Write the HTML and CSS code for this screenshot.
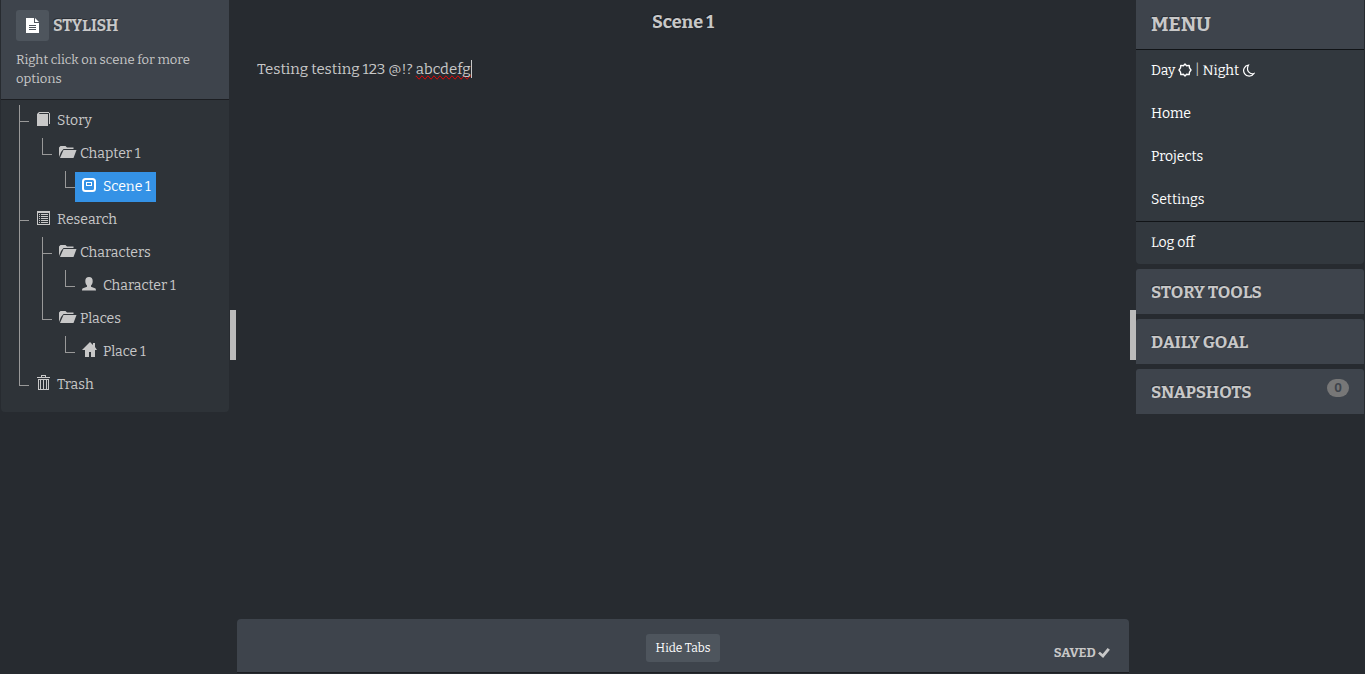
FILE: index.html
```html
<!DOCTYPE html>
<html lang="en">
<head>
    <meta charset="utf-8">
    <title>Stylish</title>
    <link rel="stylesheet" href="styles.css">
</head>
<body>
    <!-- Icons used in the project tree -->
    <svg class="sprite" aria-hidden="true">
        <symbol id="icon-folder" viewBox="0 0 18 16">
            <path d="M0 13V3.5L1.5 2h5L8 3.500h6.500V5H4.500L2 8z"/>
            <path d="M4.500 6h13l-3 8H1z"/>
        </symbol>
    </svg>

    <div class="layout">
        <aside class="sidebar">
            <div class="panel">
                <div class="panel-heading project-heading">
                    <div class="project-title">
                        <button class="btn btn-icon" type="button" aria-label="New scene">
                            <svg width="13" height="15" viewBox="0 0 13 15"><path fill="#fff" d="M0 0h8v5h5v10H0zM9 0l4 4H9z"/><path stroke="#4e555d" d="M3 7.5h7M3 9.5h7M3 11.5h7"/></svg>
                        </button>
                        <h3>STYLISH</h3>
                    </div>
                    <p class="hint">Right click on scene for more options</p>
                </div>
                <div class="panel-body">
                    <ul class="tree">
                        <li>
                            <a href="#"><svg class="icon" viewBox="0 0 18 16"><path d="M1 3l2-2h10v1H3.500L3 3h9v12H1zM13 2h1v11h-1z"/></svg>Story</a>
                            <ul>
                                <li>
                                    <a href="#"><svg class="icon"><use href="#icon-folder"/></svg>Chapter 1</a>
                                    <ul>
                                        <li>
                                            <a class="selected" href="#"><svg class="icon" viewBox="0 0 18 16"><rect x="1" y="2" width="12" height="12" rx="2.5" fill="none" stroke="#fff" stroke-width="2"/><rect x="4.5" y="5.5" width="5" height="3" fill="none" stroke="#fff"/></svg>Scene 1</a>
                                        </li>
                                    </ul>
                                </li>
                            </ul>
                        </li>
                        <li>
                            <a href="#"><svg class="icon" viewBox="0 0 18 16"><path fill-rule="evenodd" d="M1 1h13v14H1zM2 3v11h11V3z"/><path d="M3 4h1v1H3zM5 4h7v1H5zM3 6h1v1H3zM5 6h7v1H5zM3 8h1v1H3zM5 8h7v1H5zM3 10h1v1H3zM5 10h7v1H5zM3 12h1v1H3zM5 12h7v1H5z"/></svg>Research</a>
                            <ul>
                                <li>
                                    <a href="#"><svg class="icon"><use href="#icon-folder"/></svg>Characters</a>
                                    <ul>
                                        <li>
                                            <a href="#"><svg class="icon" viewBox="0 0 18 16"><path d="M7 1c2.500 0 3.700 1.500 3.700 4 0 2-.7 3.500-1.700 4.500v1.200l4 1.500c.7.300 1 1 1 2.300H0c0-1.300.3-2 1-2.300l4-1.500V9.500C4 8.500 3.300 7 3.300 5 3.300 2.500 4.500 1 7 1z"/></svg>Character 1</a>
                                        </li>
                                    </ul>
                                </li>
                                <li>
                                    <a href="#"><svg class="icon"><use href="#icon-folder"/></svg>Places</a>
                                    <ul>
                                        <li>
                                            <a href="#"><svg class="icon" viewBox="0 0 18 16"><path d="M8 0l3 3V1h2v4l2 3h-2v7H9v-5H7v5H3V8H0z"/></svg>Place 1</a>
                                        </li>
                                    </ul>
                                </li>
                            </ul>
                        </li>
                        <li>
                            <a href="#"><svg class="icon" viewBox="0 0 18 16"><path fill-rule="evenodd" d="M1 2h4V0h5v2h4v1H1zM6 1v1h3V1zM2 4h11v11H2zM3 5v9h1V5zM5 5v9h2V5zM8 5v9h2V5zM11 5v9h1V5z"/></svg>Trash</a>
                        </li>
                    </ul>
                </div>
            </div>
        </aside>

        <div class="resizer resizer-left"></div>

        <main class="editor">
            <h4 class="scene-title">Scene 1</h4>
            <div class="scene-text" contenteditable="true" role="textbox" aria-label="Scene text" spellcheck="false">Testing testing 123 @!? <span class="misspelled">abcdefg</span><span class="caret"></span></div>
            <div class="toolbar">
                <button class="btn btn-tabs" type="button">Hide Tabs</button>
                <span class="saved">SAVED
                    <svg width="12" height="10" viewBox="0 0 13 11"><path fill="#c8c8c8" d="M0 6l2-2 3 2.500L10.500 0 13 2 5.500 11z"/></svg>
                </span>
            </div>
        </main>

        <div class="resizer resizer-right"></div>

        <aside class="sidebar sidebar-right">
            <nav class="panel menu">
                <h2 class="panel-heading">MENU</h2>
                <ul>
                    <li class="divider">
                        <a href="#">Day <svg width="14" height="14" viewBox="0 0 14 14"><path fill="none" stroke="#fff" stroke-width="1.400" stroke-linejoin="round" d="M7 1l1.600 1.700 2.600-.3.300 2.500L13 7l-1.500 2.100-.3 2.500-2.600-.3L7 13l-1.600-1.700-2.600.3-.3-2.500L1 7l1.500-2.100.3-2.500 2.600.3z"/></svg></a>
                        |
                        <a href="#">Night <svg width="13" height="13" viewBox="0 0 13 13"><path fill="none" stroke="#fff" stroke-width="1.200" d="M6.500 1A5.600 5.600 0 1 0 12 9.500C8 10.800 3.500 7 6.500 1z"/></svg></a>
                    </li>
                    <li><a href="#">Home</a></li>
                    <li><a href="#">Projects</a></li>
                    <li><a href="#">Settings</a></li>
                    <li class="divider"><a href="#">Log off</a></li>
                </ul>
            </nav>
            <div class="panel tool-heading"><h3>STORY TOOLS</h3></div>
            <div class="panel tool-heading"><h3>DAILY GOAL</h3></div>
            <div class="panel tool-heading"><h3>SNAPSHOTS</h3><span class="badge">0</span></div>
        </aside>
    </div>
</body>
</html>
```
FILE: styles.css
```css
*,
*::before,
*::after {
    box-sizing: border-box;
}

body {
    margin: 0;
    background-color: #272b30;
    color: #c8c8c8;
    font-family: Bitter, "DejaVu Serif Condensed", "DejaVu Serif", serif;
    font-size: 14px;
    line-height: 20px;
}

h2, h3, h4, p, ul {
    margin: 0;
    padding: 0;
}

ul {
    list-style: none;
}

a {
    color: #fff;
    text-decoration: none;
}

h2, h3, h4 {
    text-shadow: -1px -1px 0 rgba(0, 0, 0, 0.3);
}

h3 {
    font-size: 16px;
}

.sprite {
    display: none;
}

.layout {
    display: flex;
    min-height: 100vh;
    padding: 0 1px;
}

.sidebar {
    flex: 0 0 228px;
}

/* panels */
.panel {
    background-color: #2e3338;
    border-radius: 0 0 4px 4px;
}

.panel-heading {
    background-color: #3e444c;
    padding: 10px 15px;
}

.project-heading {
    border-bottom: 1px solid #1c1e22;
}

.project-title {
    display: flex;
    align-items: center;
    gap: 4px;
}

.hint {
    padding: 9px 0 1px;
    font-size: 13px;
    line-height: 19px;
}

.panel-body {
    padding: 5px 0 10px 18px;
}

/* buttons */
.btn {
    border: 0;
    border-radius: 3px;
    background-color: #4e555d;
    color: #fff;
    font-family: inherit;
    font-size: 12px;
}

.btn-icon {
    display: flex;
    align-items: center;
    justify-content: center;
    width: 33px;
    height: 31px;
    padding: 0;
}

/* project tree */
.tree ul {
    margin-left: 13px;
}

.tree li {
    display: flow-root;
    position: relative;
    padding: 1px 0 0 10px;
}

.tree li::before {
    content: "";
    position: absolute;
    top: 0;
    left: 0;
    width: 10px;
    height: 17px;
    border-left: 1px solid #999;
    border-bottom: 1px solid #999;
}

.tree li:not(:last-child)::after {
    content: "";
    position: absolute;
    top: 0;
    bottom: 0;
    left: 0;
    border-left: 1px solid #999;
}

.tree a {
    display: flex;
    align-items: center;
    gap: 3px;
    width: fit-content;
    height: 30px;
    margin-bottom: 2px;
    padding: 0 5px 0 7px;
    color: #c8c8c8;
}

.tree .selected {
    background-color: #3492e6;
    color: #fff;
}

.icon {
    width: 18px;
    height: 16px;
    margin-bottom: 4px;
    fill: #c8c8c8;
}

/* drag handles */
.resizer {
    align-self: center;
    height: 50px;
    margin-bottom: 4px;
    background-color: #bbb;
}

.resizer-left {
    flex: 0 0 6px;
    margin-left: 1px;
    margin-right: 1px;
}

.resizer-right {
    flex: 0 0 6px;
    margin-left: 1px;
}

/* editor */
.editor {
    flex: 1;
    display: flex;
    flex-direction: column;
    padding-bottom: 1px;
}

.scene-title {
    padding-top: 12px;
    font-size: 18px;
    text-align: center;
}

.scene-text {
    flex: 1;
    padding: 27px 20px;
    font-size: 15px;
    outline: 0;
}

.misspelled {
    text-decoration-line: spelling-error;
}

.caret {
    border-right: 1px solid #c8c8c8;
}

.toolbar {
    display: grid;
    grid-template-columns: 1fr auto 1fr;
    align-items: center;
    height: 54px;
    padding: 0 19px;
    border-radius: 4px 4px 0 0;
    border-bottom: 1px solid #1c1e22;
    background-color: #3e444c;
}

.btn-tabs {
    grid-column: 2;
    height: 28px;
    margin-top: 4px;
    padding: 0 10px;
}

.saved {
    justify-self: end;
    padding-top: 14px;
    font-size: 13px;
    font-weight: bold;
}

.saved svg {
    vertical-align: -1px;
}

/* right column */
.sidebar-right {
    display: flex;
    flex-direction: column;
    gap: 5px;
}

.menu {
    background-color: #32383e;
}

.menu h2 {
    height: 49px;
    padding-top: 14px;
    font-size: 20px;
}

.menu li {
    height: 43px;
    padding: 12px 15px;
}

.menu .divider {
    border-top: 1px solid #111417;
    padding-top: 11px;
}

.menu svg {
    vertical-align: -2px;
}

.tool-heading {
    display: flex;
    justify-content: space-between;
    height: 45px;
    padding: 10px 15px;
    border-radius: 3px 3px 0 0;
    background-color: #3e444c;
}

.tool-heading h3 {
    padding-top: 4px;
    font-size: 17px;
}

.badge {
    width: 22px;
    height: 18px;
    border-radius: 9px;
    background-color: #777;
    color: #3e444c;
    font-size: 12px;
    font-weight: bold;
    line-height: 18px;
    text-align: center;
}
```
